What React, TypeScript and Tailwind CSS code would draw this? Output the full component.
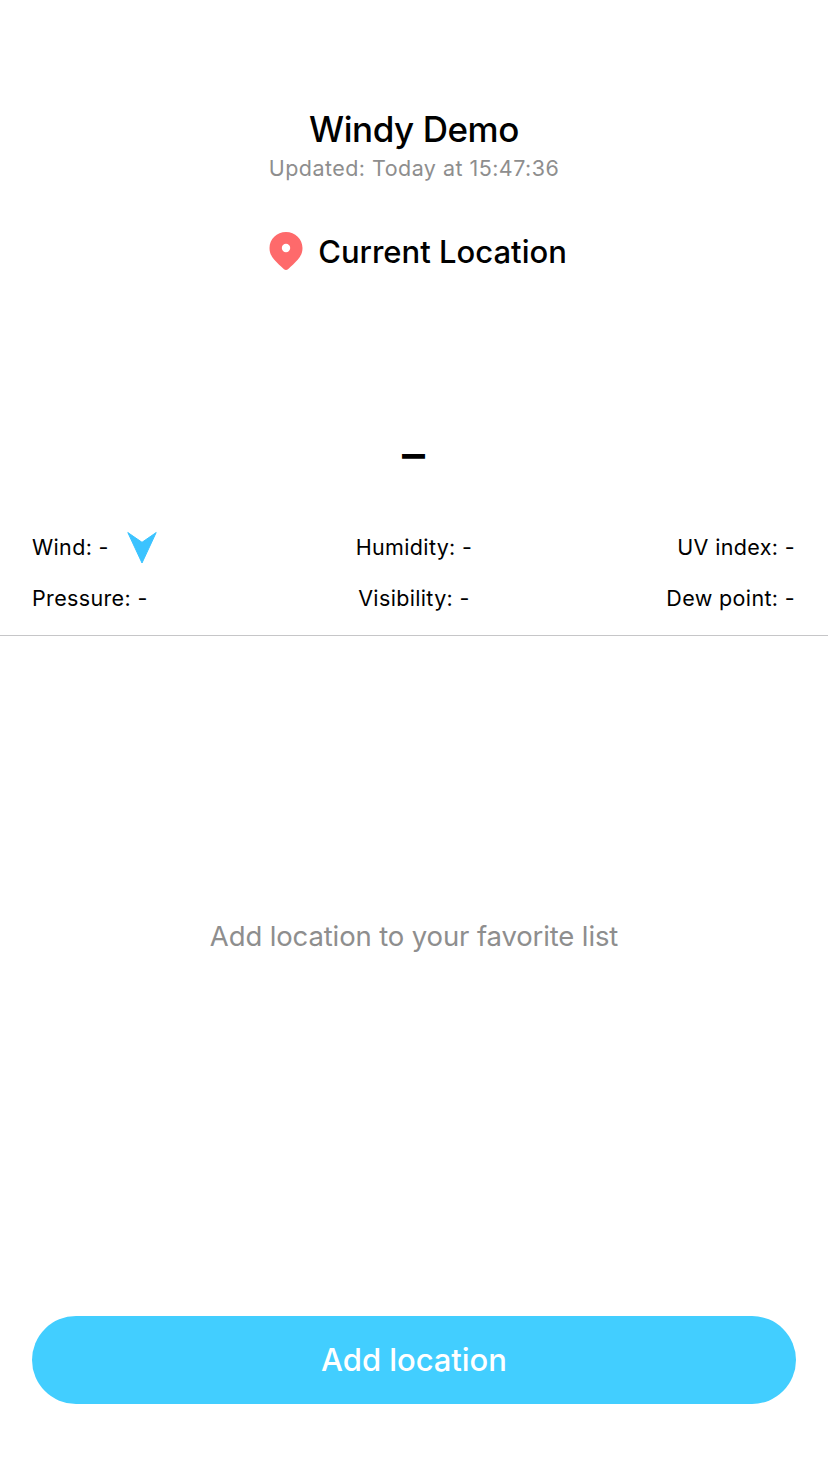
export default function App() {
  return (
    <main className="flex h-[1472px] w-[828px] flex-col bg-white font-['Inter',sans-serif] text-black">
      <header className="flex flex-col items-center pt-[105px]">
        <h1 className="h-[49px] text-[35px] leading-[48px] font-medium whitespace-nowrap tracking-[-0.45px]">Windy Demo</h1>
        <p className="h-7 text-[21.5px] leading-7 whitespace-nowrap tracking-[0.46px] text-[#8e8e8e]">Updated: Today at 15:47:36</p>
        <div className="mt-12 flex h-[42px] items-center gap-[15px] pl-2">
          <svg width="34" height="40" viewBox="0 0 34 40" fill="none">
            <path d="M17 1C7.800 1 .5 8 .5 17c0 4.500 1.800 8.500 4.800 11.800 2.700 3 6.200 6.200 9.700 9.400 1.200 1.100 2.800 1.100 4 0 3.500-3.200 7-6.400 9.700-9.400 3-3.300 4.800-7.300 4.800-11.800C33.500 8 26.200 1 17 1Z" fill="#fe6a6b" />
            <circle cx="17" cy="17" r="4.200" fill="white" />
          </svg>
          <h2 className="pt-0.5 text-[31px] leading-10 font-medium whitespace-nowrap">Current Location</h2>
        </div>
      </header>
      <section className="flex h-[364px] flex-col border-b border-[#c6c6c8] px-8">
        <div className="flex h-[250px] items-end justify-center pr-px pb-[45px]">
          <span className="text-[46px] leading-[48px] font-semibold">–</span>
        </div>
        <div className="grid grid-cols-3 text-[21.5px] leading-[51px] tracking-[0.35px]">
          <div className="flex items-center gap-[18px]">
            <span>Wind: -</span>
            <svg width="30" height="33" viewBox="0 0 30 33">
              <path d="M.8 1.500 15 11.300 29.200 1.500 15 32Z" fill="#3bc3ff" stroke="#3bc3ff" strokeWidth="1" strokeLinejoin="round" />
            </svg>
          </div>
          <span className="text-center">Humidity: -</span>
          <span className="pr-px text-right">UV index: -</span>
          <span>Pressure: -</span>
          <span className="text-center">Visibility: -</span>
          <span className="pr-px text-right">Dew point: -</span>
        </div>
      </section>
      <section className="flex h-[602px] items-center justify-center text-[27.5px] tracking-[-0.13px] text-[#8e8e8e]">Add location to your favorite list</section>
      <footer className="mt-auto px-8 pb-[68px]">
        <button className="h-[88px] w-full rounded-full bg-[#42ceff] pt-px text-[31px] font-medium tracking-[-0.05px] text-white">Add location</button>
      </footer>
    </main>
  );
}
